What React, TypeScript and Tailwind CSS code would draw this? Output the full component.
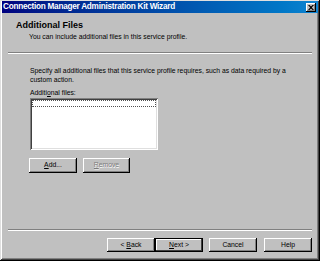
import React from "react";

const raised =
  "shadow-[inset_-1px_-1px_#000000,inset_1px_1px_#ffffff,inset_-2px_-2px_#808080]";

function Btn({
  children,
  className = "",
  disabled = false,
  def = false,
  h = "h-[15px]",
  w = "w-[48px]",
}: {
  children: React.ReactNode;
  className?: string;
  disabled?: boolean;
  def?: boolean;
  h?: string;
  w?: string;
}) {
  return (
    <div
      className={
        "flex items-center justify-center bg-[#c0c0c0] text-[6.8px] leading-none " +
        h +
        " " +
        w +
        " " +
        (def
          ? "shadow-[inset_-1px_-1px_#000000,inset_1px_1px_#000000,inset_-2px_-2px_#404040,inset_2px_2px_#ffffff]"
          : raised) +
        " " +
        (disabled ? "text-[#7b7b7b] [text-shadow:0.5px_0.5px_#ffffff]" : "text-black") +
        " " +
        className
      }
    >
      {children}
    </div>
  );
}

export default function App() {
  return (
    <div
      className="w-[320px] h-[261px] bg-[#c0c0c0] pt-[1px] px-[2px] pb-[2px] flex flex-col shadow-[inset_-1px_-1px_#000000,inset_1px_1px_#dfdfdf,inset_-2px_-2px_#404040,inset_2px_2px_#ffffff,inset_-3px_-3px_#808080] overflow-hidden"
      style={{ fontFamily: '"Liberation Sans", Arial, sans-serif' }}
    >
      {/* Title bar */}
      <div className="h-[12px] flex items-center justify-between pl-[1px] pr-[2px] bg-gradient-to-r from-[#000080] to-[#1084d0]">
        <span className="text-white font-bold text-[8.2px] leading-none tracking-[-0.25px]">
          Connection Manager Administration Kit Wizard
        </span>
        <div className={"w-[10px] h-[9px] bg-[#c0c0c0] flex items-center justify-center " + raised}>
          <svg width="6" height="5" viewBox="0 0 6 5">
            <path d="M0 0h1.5l1.5 1.5 1.5-1.5H6L3.8 2.5 6 5H4.5L3 3.5 1.5 5H0l2.2-2.5z" fill="#000" />
          </svg>
        </div>
      </div>

      {/* Header */}
      <div className="pt-[7px] pl-[14px] h-[39px]">
        <div className="font-bold text-[9px] leading-[11px] text-black">Additional Files</div>
        <div className="pl-[13px] text-[6.8px] leading-[9px] text-black mt-[1px]">
          You can include additional files in this service profile.
        </div>
      </div>
      <div className="mx-[6px] h-[2px] border-t border-[#808080] border-b border-b-white" />

      {/* Body */}
      <div className="flex-1 pl-[28px] pt-[12px]">
        <div className="text-[6.8px] leading-[9px] text-black w-[262px]">
          Specify all additional files that this service profile requires, such as data required by a custom action.
        </div>
        <div className="text-[6.8px] leading-[9px] text-black mt-[4px]">
          Additi<span className="underline">o</span>nal files:
        </div>
        <div className="mt-[1px] w-[128px] h-[52px] bg-white shadow-[inset_1px_1px_#808080,inset_-1px_-1px_#ffffff,inset_2px_2px_#404040,inset_-2px_-2px_#dfdfdf] p-[2px]">
          <div className="h-[7px] border border-dotted border-[#505050]" />
        </div>
        <div className="flex gap-[6px] mt-[8px] -ml-[1px]">
          <Btn>
            <span>
              <span className="underline">A</span>dd...
            </span>
          </Btn>
          <Btn disabled w="w-[47px]">
            <span>
              <span className="underline">R</span>emove
            </span>
          </Btn>
        </div>
      </div>

      {/* Bottom */}
      <div className="mx-[6px] h-[2px] border-t border-[#808080] border-b border-b-white" />
      <div className="flex justify-end pr-[6px] pt-[7px] pb-[7px]">
        <Btn h="h-[14px]">
          <span>
            &lt; <span className="underline">B</span>ack
          </span>
        </Btn>
        <Btn def h="h-[14px]">
          <span>
            <span className="underline">N</span>ext &gt;
          </span>
        </Btn>
        <Btn h="h-[14px]" className="ml-[6px]">Cancel</Btn>
        <Btn h="h-[14px]" className="ml-[7px]">Help</Btn>
      </div>
    </div>
  );
}
